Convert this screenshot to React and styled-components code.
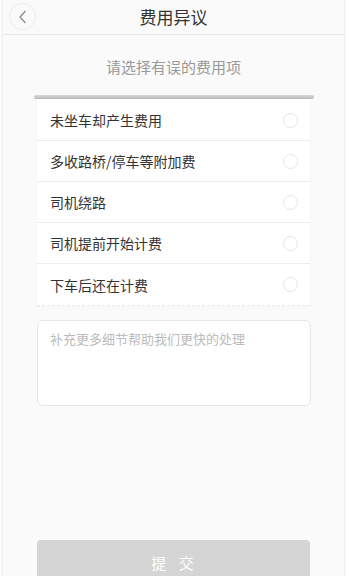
import styled, { createGlobalStyle } from "styled-components";
import { useState } from "react";

const GlobalStyle = createGlobalStyle`
    html, body {
        margin: 0;
        padding: 0;
        height: 100%;
        overflow: hidden;
        background: #fafafa;
    }
    * {
        box-sizing: border-box;
    }
`;

const Page = styled.div`
    min-height: 576px;
    margin: 0 2px;
    border-left: 1px solid #eeeeee;
    border-right: 1px solid #eeeeee;
    background: #fafafa;
    font-family: "Noto Sans CJK SC", "Noto Sans", sans-serif;
    display: flex;
    flex-direction: column;
`;

const Header = styled.header`
    height: 35px;
    border-bottom: 1px solid #e8e8e8;
    display: flex;
    align-items: center;
    justify-content: center;
    position: relative;
`;

const BackButton = styled.button`
    position: absolute;
    left: 6px;
    top: 3px;
    width: 27px;
    height: 27px;
    border-radius: 50%;
    border: 1px solid #ececec;
    background: #fafafa;
    padding: 0;
    display: flex;
    align-items: center;
    justify-content: center;
`;

const Title = styled.h1`
    margin: 0;
    font-size: 17px;
    font-weight: 400;
    color: #333;
    line-height: 1;
    padding-bottom: 2px;
`;

const Subtitle = styled.p`
    margin: 21px 0 0;
    text-align: center;
    font-size: 15px;
    line-height: 21px;
    color: #999;
`;

const Slot = styled.div`
    margin: 18px 30px 0 31px;
    height: 4px;
    border-radius: 2px;
    background: linear-gradient(#d8d8d8, #b9b9b9);
    position: relative;
    z-index: 1;
`;

const Card = styled.ul`
    list-style: none;
    margin: -1px 34px 0 34px;
    padding: 2px 0 0;
    background: #fff;
    box-shadow: 0 0 2px rgba(0, 0, 0, 0.06);
    border-bottom: 1px dashed #ececec;
`;

const Row = styled.li`
    height: 41px;
    display: flex;
    align-items: center;
    justify-content: space-between;
    padding: 0 12px 0 13px;
    font-size: 14px;
    color: #333;
    cursor: pointer;

    &:not(:last-child) {
        border-bottom: 1px solid #ececec;
    }
`;

const Radio = styled.span`
    width: 15px;
    height: 15px;
    border-radius: 50%;
    border: 1px solid ${(p) => (p.$checked ? "#fc9153" : "#e6e6e6")};
    background: ${(p) => (p.$checked ? "#fc9153" : "#fff")};
`;

const Note = styled.textarea`
    margin: 14px 33px 0 34px;
    height: 86px;
    border: 1px solid #e6e6e6;
    border-radius: 6px;
    background: #fff;
    resize: none;
    padding: 9px 12px;
    font-family: inherit;
    font-size: 13px;
    line-height: 18px;
    color: #333;
    outline: none;

    &::placeholder {
        color: #bbb;
    }
`;

const Submit = styled.button`
    margin: 134px 34px 0 34px;
    height: 44px;
    border: none;
    border-radius: 4px;
    background: #d5d5d5;
    color: #fff;
    font-family: inherit;
    font-size: 15px;
    letter-spacing: 2px;
    white-space: pre;
`;

const reasons = [
    "未坐车却产生费用",
    "多收路桥/停车等附加费",
    "司机绕路",
    "司机提前开始计费",
    "下车后还在计费",
];

function App() {
    const [picked, setPicked] = useState(null);

    return (
        <>
            <GlobalStyle />
            <Page>
                <Header>
                    <BackButton aria-label="返回">
                        <svg width="10" height="14" viewBox="0 0 10 14">
                            <path
                                d="M7.5 1 L2 7 L7.5 13"
                                fill="none"
                                stroke="#8a8a8a"
                                strokeWidth="1.3"
                            />
                        </svg>
                    </BackButton>
                    <Title>费用异议</Title>
                </Header>
                <Subtitle>请选择有误的费用项</Subtitle>
                <Slot />
                <Card>
                    {reasons.map((r, i) => (
                        <Row key={r} onClick={() => setPicked(i)}>
                            {r}
                            <Radio $checked={picked === i} />
                        </Row>
                    ))}
                </Card>
                <Note placeholder="补充更多细节帮助我们更快的处理" />
                <Submit disabled={picked === null}>提  交</Submit>
            </Page>
        </>
    );
}

export default App;
